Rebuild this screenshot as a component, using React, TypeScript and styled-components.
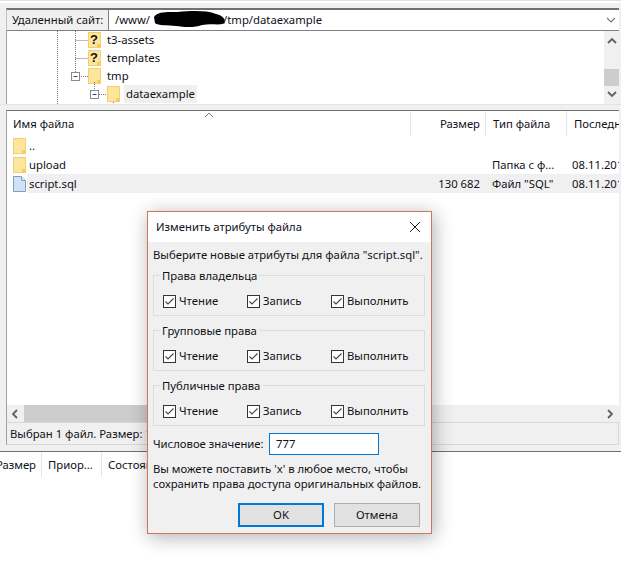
import React from "react";
import styled, { createGlobalStyle } from "styled-components";

const Global = createGlobalStyle`
  html, body { margin: 0; padding: 0; background: #f0f0f0; }
  * { box-sizing: border-box; }
`;

const Page = styled.div`
  position: relative;
  width: 621px;
  height: 572px;
  overflow: hidden;
  background: #f0f0f0;
  color: #101018;
  font: 11.3px/16px "Noto Sans", "Open Sans", sans-serif;
  display: flex;
  flex-direction: column;
`;

const TopStrip = styled.div`
  height: 8px;
  flex: none;
  background: linear-gradient(#dedede 0 1px, #ffffff 1px 3px, #f0f0f0 3px);
`;

const SiteBar = styled.div`
  display: flex;
  height: 23px;
  flex: none;
  margin: 0 2px 0 6px;
  border-top: 2px solid #707070;
  border-bottom: 1px solid #808080;
  border-left: 1px solid #c0c0c0;
`;

const SiteLabel = styled.div`
  width: 102px;
  flex: none;
  display: flex;
  align-items: center;
  padding-left: 5px;
  background: #f0f0f0;
  border-right: 1px solid #808080;
`;

const PathBox = styled.div`
  position: relative;
  flex: 1;
  background: #fff;
  padding-left: 6px;
  display: flex;
  align-items: center;
  justify-content: space-between;
  padding-right: 3px;
`;

const PathGap = styled.span`
  display: inline-block;
  width: 73px;
`;

const Blob = styled.svg`
  position: absolute;
  left: 45px;
  top: 0;
`;

const Pane = styled.div<{ $h: number }>`
  position: relative;
  flex: none;
  height: ${(p) => p.$h}px;
  margin: 0 2px 0 6px;
  background: #fff;
  border-left: 1px solid #a0a0a0;
  display: flex;
`;

const TreeBody = styled.div`
  position: relative;
  flex: 1;
  overflow: hidden;
`;

const TreeLines = styled.svg`
  position: absolute;
  left: 0;
  top: 0;
`;

const TreeRow = styled.div<{ $indent: number }>`
  height: 18px;
  display: flex;
  align-items: center;
  padding-left: ${(p) => p.$indent}px;
  gap: 4px;
`;

const TreeText = styled.span<{ $selected?: boolean }>`
  padding: 1px 2px;
  background: ${(p) => (p.$selected ? "#f0f0f0" : "transparent")};
  height: 18px;
  line-height: 16px;
`;

const VScroll = styled.div`
  width: 15px;
  flex: none;
  background: #f0f0f0;
  display: flex;
  flex-direction: column;
  align-items: center;
  justify-content: space-between;
  position: relative;
  padding: 6px 0;
`;

const VThumb = styled.div`
  position: absolute;
  left: 0;
  top: 38px;
  width: 15px;
  height: 17px;
  background: #cdcdcd;
`;

const Splitter = styled.div`
  height: 6px;
  flex: none;
  background: linear-gradient(#e4e4e4 0 1px, #f0f0f0 1px);
`;

const FilePane = styled.div`
  position: relative;
  flex: none;
  height: 312px;
  margin: 0 2px 0 6px;
  background: #fff;
  border-top: 1px solid #707070;
  border-left: 1px solid #a0a0a0;
  display: flex;
  flex-direction: column;
`;

const ListHeader = styled.div`
  height: 25px;
  flex: none;
  display: grid;
  grid-template-columns: 403px 75px 81px 1fr;
  position: relative;
`;

const HeadCell = styled.div<{ $right?: boolean; $first?: boolean }>`
  display: flex;
  align-items: center;
  padding: 0 5px 0 ${(p) => (p.$first ? 6 : 7)}px;
  justify-content: ${(p) => (p.$right ? "flex-end" : "flex-start")};
  border-left: ${(p) => (p.$first ? "none" : "1px solid #e5e5e5")};
  white-space: nowrap;
  overflow: hidden;
`;

const SortMark = styled.svg`
  position: absolute;
  left: 197px;
  top: 1px;
`;

const FileRow = styled.div`
  height: 19px;
  flex: none;
  display: flex;
  align-items: center;
`;

const IconSlot = styled.div`
  width: 20px;
  flex: none;
  padding-left: 6px;
  display: flex;
  align-items: center;
`;

const FileCells = styled.div<{ $selected?: boolean }>`
  flex: 1;
  height: 19px;
  display: grid;
  grid-template-columns: 383px 75px 81px 1fr;
  align-items: center;
  background: ${(p) => (p.$selected ? "#f0f0f0" : "transparent")};
`;

const Cell = styled.div<{ $right?: boolean; $pad?: number }>`
  text-align: ${(p) => (p.$right ? "right" : "left")};
  padding: ${(p) => (p.$right ? "0 5px 0 0" : `0 0 0 ${p.$pad ?? 7}px`)};
  white-space: nowrap;
  overflow: hidden;
`;

const ListSpacer = styled.div`
  flex: 1;
`;

const HScroll = styled.div`
  height: 17px;
  flex: none;
  background: #f0f0f0;
  display: flex;
  align-items: center;
  justify-content: space-between;
  position: relative;
  padding: 0 4px;
`;

const HThumb = styled.div`
  position: absolute;
  left: 17px;
  top: 0;
  bottom: 0;
  width: 280px;
  background: #cdcdcd;
`;

const StatusBar = styled.div`
  height: 23px;
  flex: none;
  margin: 0 2px 0 6px;
  padding: 1px 0 0 3px;
  display: flex;
  align-items: center;
  background: #f0f0f0;
  border: 1px solid #d9d9d9;
  border-left-color: #a0a0a0;
  white-space: nowrap;
`;

const Gap = styled.div`
  height: 6px;
  flex: none;
`;

const QueuePane = styled.div`
  flex: 1;
  background: #fff;
  border-top: 1px solid #707070;
`;

const QueueHeader = styled.div`
  height: 25px;
  display: grid;
  grid-template-columns: 41px 60px 1fr;
`;

const QueueCell = styled.div<{ $first?: boolean }>`
  display: flex;
  align-items: center;
  padding-left: ${(p) => (p.$first ? 0 : 6)}px;
  justify-content: ${(p) => (p.$first ? "flex-end" : "flex-start")};
  padding-right: ${(p) => (p.$first ? 5 : 0)}px;
  border-left: ${(p) => (p.$first ? "none" : "1px solid #e5e5e5")};
  white-space: nowrap;
  overflow: hidden;
`;

/* Dialog */
const Dialog = styled.div`
  position: absolute;
  left: 147px;
  top: 211px;
  width: 285px;
  height: 323px;
  background: #f0f0f0;
  border: 1px solid #c9795b;
  box-shadow: 2px 3px 18px rgba(0, 0, 0, 0.32);
  display: flex;
  flex-direction: column;
`;

const TitleBar = styled.div`
  height: 30px;
  flex: none;
  background: #fff;
  display: flex;
  align-items: center;
  justify-content: space-between;
  padding: 0 10px 0 8px;
`;

const DialogBody = styled.div`
  flex: 1;
  padding: 5px 6px 6px 5px;
  display: flex;
  flex-direction: column;
`;

const Intro = styled.div`
  height: 16px;
  margin-bottom: 12px;
  white-space: nowrap;
`;

const Group = styled.div`
  margin: 0 0 14px;
  height: 41px;
  flex: none;
  border: 1px solid #dcdcdc;
  position: relative;
`;

const GroupTitle = styled.span`
  position: absolute;
  left: 6px;
  top: -8px;
  padding: 0 2px;
  background: #f0f0f0;
`;

const CheckRow = styled.div`
  display: grid;
  grid-template-columns: 84px 84px 1fr;
  padding: 18px 0 0 9px;
`;

const CheckLabel = styled.label`
  display: flex;
  align-items: center;
  gap: 3px;
  height: 14px;
  white-space: nowrap;
`;

const NumericRow = styled.div`
  display: flex;
  align-items: center;
  margin-top: -7px;
  height: 22px;
`;

const NumericLabel = styled.div`
  width: 116px;
  flex: none;
  white-space: nowrap;
`;

const NumericInput = styled.div`
  width: 110px;
  height: 22px;
  background: #fff;
  border: 1px solid #0078d7;
  padding-left: 6px;
  display: flex;
  align-items: center;
`;

const Help = styled.div`
  margin-top: 6px;
  line-height: 15px;
  white-space: nowrap;
`;

const Buttons = styled.div`
  margin-top: auto;
  display: flex;
  justify-content: flex-end;
  gap: 10px;
  padding: 0 5px 0 0;
`;

const DlgButton = styled.div<{ $primary?: boolean }>`
  width: 86px;
  height: 24px;
  background: #e1e1e1;
  border: ${(p) => (p.$primary ? "2px solid #0078d7" : "1px solid #adadad")};
  display: flex;
  align-items: center;
  justify-content: center;
`;

const IconSvg = styled.svg`
  flex: none;
  display: block;
`;

/* Icons */
const Folder = () => (
  <IconSvg width="13" height="16" viewBox="0 0 13 16">
    <rect x="0.5" y="0.5" width="12" height="15" fill="#fde59c" stroke="#f2d06e" />
    <rect x="9" y="12" width="3" height="3" fill="#f5cd5e" />
  </IconSvg>
);

const UnknownFolder = () => (
  <IconSvg width="13" height="16" viewBox="0 0 13 16">
    <rect x="0.5" y="0.5" width="12" height="15" fill="#fde59c" stroke="#f2d06e" />
    <rect x="9" y="12" width="3" height="3" fill="#f5cd5e" />
    <text x="6" y="12" textAnchor="middle" fontFamily="Liberation Sans, sans-serif" fontWeight="700" fontSize="13" fill="#111">?</text>
  </IconSvg>
);

const FileIcon = () => (
  <IconSvg width="13" height="16" viewBox="0 0 13 16">
    <path d="M0.5 0.5H8.5L12.5 4.5V15.5H0.5Z" fill="#cfe2f8" stroke="#7f9fc0" />
    <path d="M8.5 0.5V4.5H12.5" fill="#e6f0fb" stroke="#7f9fc0" />
  </IconSvg>
);

const Chevron = ({ dir, color = "#606060", width = 1.8 }: { dir: "up" | "down" | "left" | "right"; color?: string; width?: number }) => {
  const vertical = dir === "up" || dir === "down";
  const d = { up: "M1 6L5 2L9 6", down: "M1 2L5 6L9 2", left: "M6 1L2 5L6 9", right: "M3 1L7 5L3 9" }[dir];
  return (
    <IconSvg style={{ position: "relative" }} width="10" height={vertical ? 8 : 10} viewBox={vertical ? "0 0 10 8" : "0 0 10 10"}>
      <path d={d} fill="none" stroke={color} strokeWidth={width} />
    </IconSvg>
  );
};

const Check = () => (
  <IconSvg width="13" height="13" viewBox="0 0 13 13">
    <rect x="0.5" y="0.5" width="12" height="12" fill="#fff" stroke="#333" />
    <path d="M2.5 6.5L5 9L10.5 3.5" fill="none" stroke="#444" strokeWidth="1.1" />
  </IconSvg>
);

const perms = ["Права владельца", "Групповые права", "Публичные права"];

export default function App() {
  return (
    <Page>
      <Global />
      <TopStrip />
      <SiteBar>
        <SiteLabel>Удаленный сайт:</SiteLabel>
        <PathBox>
          <span>/www/<PathGap />/tmp/dataexample</span>
          <Blob width="72" height="21" viewBox="0 0 72 21">
            <path d="M0 7C4 1 14 2 24 2C36 1 52 0 62 4C70 6 72 10 70 13C66 16 58 13 48 15C40 18 30 17 22 16C14 15 4 16 1 13Z" fill="#000" />
          </Blob>
          <Chevron dir="down" color="#777" width={1.1} />
        </PathBox>
      </SiteBar>
      <Pane $h={73}>
        <TreeBody>
          <TreeLines width="596" height="73" viewBox="0 0 596 73">
            <g stroke="#777" strokeDasharray="1 1" fill="none">
              <path d="M50.5 0V73" />
              <path d="M68.5 0V41" />
              <path d="M68.5 9.5H81" />
              <path d="M68.5 27.5H81" />
              <path d="M74 45.5H81" />
              <path d="M87.5 51V59" />
              <path d="M92 63.5H100" />
              <path d="M106.5 71V73" />
            </g>
            <g fill="#fff" stroke="#8a8a8a">
              <rect x="64.5" y="41.5" width="8" height="8" />
              <rect x="83.5" y="59.5" width="8" height="8" />
            </g>
            <path d="M66.5 45.5H70.5M85.5 63.5H89.5" stroke="#334a8a" />
          </TreeLines>
          <TreeRow $indent={81}><UnknownFolder /><TreeText>t3-assets</TreeText></TreeRow>
          <TreeRow $indent={81}><UnknownFolder /><TreeText>templates</TreeText></TreeRow>
          <TreeRow $indent={81}><Folder /><TreeText>tmp</TreeText></TreeRow>
          <TreeRow $indent={100}><Folder /><TreeText $selected>dataexample</TreeText></TreeRow>
        </TreeBody>
        <VScroll>
          <VThumb />
          <Chevron dir="up" />
          <Chevron dir="down" />
        </VScroll>
      </Pane>
      <Splitter />
      <FilePane>
        <ListHeader>
          <HeadCell $first>Имя файла</HeadCell>
          <HeadCell $right>Размер</HeadCell>
          <HeadCell>Тип файла</HeadCell>
          <HeadCell>Последн</HeadCell>
          <SortMark width="10" height="6" viewBox="0 0 10 6">
            <path d="M1 5L5 1L9 5" fill="none" stroke="#777" />
          </SortMark>
        </ListHeader>
        <FileRow>
          <IconSlot><Folder /></IconSlot>
          <FileCells><Cell $pad={2}>..</Cell></FileCells>
        </FileRow>
        <FileRow>
          <IconSlot><Folder /></IconSlot>
          <FileCells>
            <Cell $pad={2}>upload</Cell>
            <Cell />
            <Cell>Папка с ф...</Cell>
            <Cell $pad={6}>08.11.2017</Cell>
          </FileCells>
        </FileRow>
        <FileRow>
          <IconSlot><FileIcon /></IconSlot>
          <FileCells $selected>
            <Cell $pad={2}>script.sql</Cell>
            <Cell $right>130 682</Cell>
            <Cell>Файл "SQL"</Cell>
            <Cell $pad={6}>08.11.2017</Cell>
          </FileCells>
        </FileRow>
        <ListSpacer />
        <HScroll>
          <HThumb />
          <Chevron dir="left" />
          <Chevron dir="right" />
        </HScroll>
      </FilePane>
      <StatusBar>Выбран 1 файл. Размер: 130 682 байт</StatusBar>
      <Gap />
      <QueuePane>
        <QueueHeader>
          <QueueCell $first>Размер</QueueCell>
          <QueueCell>Приор...</QueueCell>
          <QueueCell>Состояние</QueueCell>
        </QueueHeader>
      </QueuePane>
      <Dialog>
        <TitleBar>
          <span>Изменить атрибуты файла</span>
          <svg width="12" height="12" viewBox="0 0 12 12">
            <path d="M1 1L11 11M11 1L1 11" stroke="#222" fill="none" />
          </svg>
        </TitleBar>
        <DialogBody>
          <Intro>Выберите новые атрибуты для файла "script.sql".</Intro>
          {perms.map((title) => (
            <Group key={title}>
              <GroupTitle>{title}</GroupTitle>
              <CheckRow>
                {["Чтение", "Запись", "Выполнить"].map((l) => (
                  <CheckLabel key={l}><Check />{l}</CheckLabel>
                ))}
              </CheckRow>
            </Group>
          ))}
          <NumericRow>
            <NumericLabel>Числовое значение:</NumericLabel>
            <NumericInput>777</NumericInput>
          </NumericRow>
          <Help>
            Вы можете поставить 'x' в любое место, чтобы<br />
            сохранить права доступа оригинальных файлов.
          </Help>
          <Buttons>
            <DlgButton $primary>OK</DlgButton>
            <DlgButton>Отмена</DlgButton>
          </Buttons>
        </DialogBody>
      </Dialog>
    </Page>
  );
}
